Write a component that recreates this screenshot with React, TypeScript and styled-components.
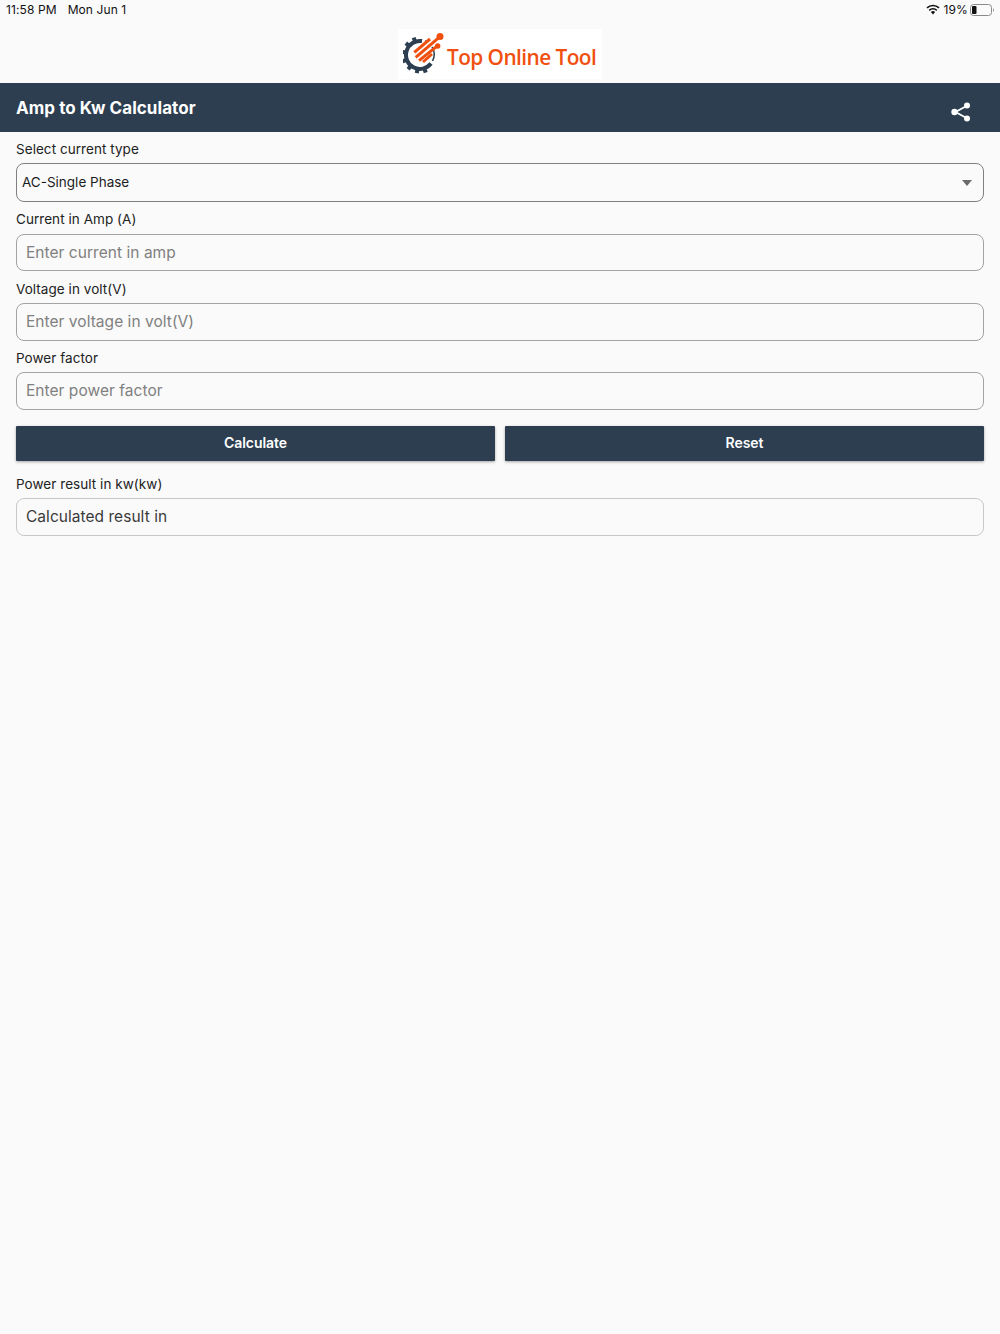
import React from "react";
import styled, { createGlobalStyle } from "styled-components";

const Global = createGlobalStyle`
  html, body { margin: 0; padding: 0; background: #fafafa; }
  body { font-family: Inter, "Liberation Sans", sans-serif; color: #1c1c1e; }
  * { box-sizing: border-box; }
`;

const Page = styled.div`
  width: 1000px;
  height: 1334px;
  background: #fafafa;
  overflow: hidden;
`;

const StatusBar = styled.div`
  height: 19px;
  padding: 0 5px 0 6px;
  display: flex;
  align-items: center;
  justify-content: space-between;
  font-size: 12px;
  letter-spacing: 0.1px;
  color: #111;
`;

const StatusGroup = styled.div`
  display: flex;
  align-items: center;
  gap: ${(p: { $gap: number }) => p.$gap}px;
`;

const Percent = styled.span`
  margin-right: -2px;
`;

const LogoBar = styled.div`
  height: 64px;
  display: flex;
  justify-content: center;
  padding-top: 10px;
`;

const LogoBox = styled.div`
  width: 204px;
  height: 50px;
  background: #fff;
  display: flex;
  align-items: center;
  padding-left: 5px;
  gap: 2px;
`;

const LogoText = styled.span`
  font-family: "Open Sans", sans-serif;
  font-size: 20.8px;
  font-weight: 600;
  letter-spacing: -0.55px;
  color: #f0500f;
  padding-top: 6px;
  white-space: nowrap;
`;

const Header = styled.header`
  height: 49px;
  background: #2c3e50;
  padding: 0 29px 0 16px;
  display: flex;
  align-items: center;
  justify-content: space-between;
`;

const Title = styled.h1`
  margin: 0;
  font-size: 17px;
  font-weight: 700;
  color: #fff;
  letter-spacing: 0.05px;
`;

const ShareButton = styled.div`
  display: flex;
  padding-top: 9px;
`;

const Form = styled.main`
  padding: 0 16px;
  display: flex;
  flex-direction: column;
`;

const Label = styled.label`
  display: flex;
  align-items: center;
  height: ${(p: { $h?: number }) => p.$h ?? 31.5}px;
  padding-top: ${(p: { $top?: number }) => p.$top ?? 3}px;
  font-size: 13.5px;
  letter-spacing: 0.05px;
  color: #222;
`;

const SelectBox = styled.div`
  height: 39px;
  border: 1px solid #808080;
  border-radius: 8px;
  padding: 0 11px 2px 5px;
  display: flex;
  align-items: center;
  justify-content: space-between;
  font-size: 13.5px;
  color: #1c1c1e;
`;

const Caret = styled.span`
  width: 0;
  height: 0;
  margin-top: 2px;
  border-left: 5px solid transparent;
  border-right: 5px solid transparent;
  border-top: 6px solid #6b6b6b;
`;

const TextBox = styled.div`
  height: ${(p: { $result?: boolean }) => (p.$result ? 38 : 37.75)}px;
  border: 1px solid ${(p: { $result?: boolean }) => (p.$result ? "#c8c8c8" : "#a3a3a3")};
  border-radius: 8px;
  padding: 0 9px;
  display: flex;
  align-items: center;
  font-size: 15.5px;
  letter-spacing: 0.04px;
  color: ${(p: { $result?: boolean }) => (p.$result ? "#3a3a3c" : "#808080")};
`;

const Actions = styled.div`
  display: grid;
  grid-template-columns: 1fr 1fr;
  gap: 10px;
  margin-top: 16px;
`;

const Button = styled.button`
  height: 35px;
  border: 0;
  border-radius: 1px;
  padding: 0 0 2px;
  background: #2c3e50;
  color: #fff;
  font: 600 14px Inter, sans-serif;
  letter-spacing: -0.05px;
  box-shadow: 0 1px 3px rgba(0, 0, 0, 0.35);
`;

const TEETH = [100, 130, 160, 190, 220, 250, 72];

const GearLogo = () => (
  <svg width="42" height="46" viewBox="0 0 42 46">
    <g fill="#2c3e50">
      {TEETH.map((a) => (
        <rect key={a} x="13.5" y="-2" width="5" height="4" transform={`translate(17 24) rotate(${a})`} />
      ))}
    </g>
    <g fill="none" stroke="#2c3e50">
      <path d="M19 10.100 A14 14 0 1 0 28 32.600" strokeWidth="4" />
      <path d="M29 16 A14 14 0 0 1 29.500 30" strokeWidth="1.500" />
      <path d="M22 10 A14 14 0 0 1 25 11" strokeWidth="1.500" />
    </g>
    <g stroke="#f0500f" strokeWidth="3" fill="none">
      <path d="M11.300 21.300 L27 8" />
      <path d="M12.700 26.300 L37 5.700" />
      <path d="M16 29.700 L34.700 14.700" />
      <path d="M20 31 L29 23" />
    </g>
    <circle cx="37" cy="5.500" r="3.500" fill="#f0500f" />
    <circle cx="34.700" cy="15" r="2.700" fill="#f0500f" />
  </svg>
);

const ShareIcon = () => (
  <svg width="20" height="20" viewBox="0 0 20 20">
    <path d="M15.500 4 L4.500 10 L15.500 16" stroke="#fff" strokeWidth="1.800" fill="none" />
    <circle cx="16" cy="3.500" r="3" fill="#fff" />
    <circle cx="3.500" cy="10" r="3.200" fill="#fff" />
    <circle cx="16" cy="16.500" r="3" fill="#fff" />
  </svg>
);

const WifiIcon = () => (
  <svg width="14" height="11" viewBox="0 0 14 11">
    <path d="M7 10.500 L4.900 8.100 A3 3 0 0 1 9.100 8.100 Z" fill="#111" />
    <path d="M3.200 6.400 A5.400 5.400 0 0 1 10.800 6.400" stroke="#111" strokeWidth="1.500" fill="none" />
    <path d="M1 3.900 A8.500 8.500 0 0 1 13 3.900" stroke="#111" strokeWidth="1.500" fill="none" />
  </svg>
);

const BatteryIcon = () => (
  <svg width="25" height="12" viewBox="0 0 25 12">
    <rect x="0.500" y="0.500" width="21" height="11" rx="3" fill="none" stroke="#8a8a8a" />
    <rect x="2" y="2" width="4.500" height="8" rx="1" fill="#111" />
    <path d="M23 4.200 C24.200 4.600 24.200 7.400 23 7.800 Z" fill="#8a8a8a" />
  </svg>
);

export default function App() {
  return (
    <Page>
      <Global />
      <StatusBar>
        <StatusGroup $gap={11}>
          <span>11:58 PM</span>
          <span>Mon Jun 1</span>
        </StatusGroup>
        <StatusGroup $gap={4}>
          <WifiIcon />
          <Percent>19%</Percent>
          <BatteryIcon />
        </StatusGroup>
      </StatusBar>
      <LogoBar>
        <LogoBox>
          <GearLogo />
          <LogoText>Top Online Tool</LogoText>
        </LogoBox>
      </LogoBar>
      <Header>
        <Title>Amp to Kw Calculator</Title>
        <ShareButton>
          <ShareIcon />
        </ShareButton>
      </Header>
      <Form>
        <Label $h={31}>Select current type</Label>
        <SelectBox>
          <span>AC-Single Phase</span>
          <Caret />
        </SelectBox>
        <Label>Current in Amp (A)</Label>
        <TextBox>Enter current in amp</TextBox>
        <Label>Voltage in volt(V)</Label>
        <TextBox>Enter voltage in volt(V)</TextBox>
        <Label>Power factor</Label>
        <TextBox>Enter power factor</TextBox>
        <Actions>
          <Button>Calculate</Button>
          <Button>Reset</Button>
        </Actions>
        <Label $h={37} $top={10}>Power result in kw(kw)</Label>
        <TextBox $result>Calculated result in</TextBox>
      </Form>
    </Page>
  );
}
